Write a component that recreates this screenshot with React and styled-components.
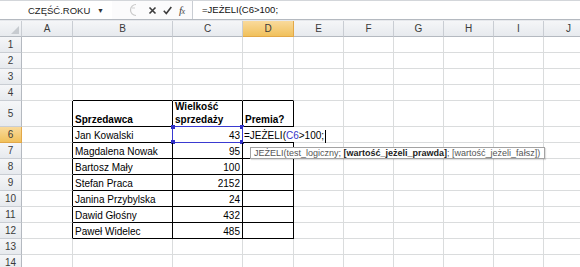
import React from 'react';
import styled, { createGlobalStyle } from 'styled-components';

const GlobalStyle = createGlobalStyle`
  html, body {
    margin: 0;
    padding: 0;
    background: #fff;
  }
  body {
    font-family: "Liberation Sans", Arial, sans-serif;
  }
`;

const COLS = [22, 51, 100, 70, 51, 50, 50, 50, 50, 50, 50];
const LETTERS = ['A', 'B', 'C', 'D', 'E', 'F', 'G', 'H', 'I', 'J'];
const ROWS = [1, 2, 3, 4, 5, 6, 7, 8, 9, 10, 11, 12, 13, 14];

// tabela B5:D12
const TABLE = [
  ['Sprzedawca', 'Wielkość sprzedaży', 'Premia?'],
  ['Jan Kowalski', 43],
  ['Magdalena Nowak', 95],
  ['Bartosz Mały', 100],
  ['Stefan Praca', 2152],
  ['Janina Przybylska', 24],
  ['Dawid Głośny', 432],
  ['Paweł Widelec', 485],
];

const inTable = (c, r) => c >= 1 && c <= 3 && r >= 5 && r <= 12;

const Window = styled.div`
  width: 580px;
  height: 267px;
  overflow: hidden;
  display: flex;
  flex-direction: column;
  background: #fff;
`;

const FormulaBar = styled.div`
  display: flex;
  height: 18px;
  flex-shrink: 0;
  border-top: 1px solid #d3d6da;
  border-bottom: 1px solid #b4b9c0;
  background: #fff;
`;

const BarGap = styled.div`
  height: 1px;
  flex-shrink: 0;
  background: #e6e8ec;
`;

const NameBox = styled.div`
  width: 112px;
  display: flex;
  align-items: center;
  font-size: 9.5px;
  color: #222;
`;

const NameText = styled.span`
  padding-left: 28px;
`;

const Arrow = styled.span`
  margin-left: auto;
  margin-right: 8px;
  font-size: 7px;
  color: #333;
`;

const Buttons = styled.div`
  width: 80px;
  display: flex;
  align-items: center;
  background: #fbfbfc;
`;

const Grip = styled.svg`
  margin-left: 15px;
  width: 12px;
  height: 14px;
`;

const Icon = styled.svg`
  margin-left: ${p => p.$gap}px;
  width: 9px;
  height: 9px;
`;

const Fx = styled.span`
  margin-left: 7px;
  font-family: "Liberation Serif", "Times New Roman", serif;
  font-style: italic;
  font-size: 11px;
  color: #444;
  letter-spacing: -0.5px;

  small {
    font-size: 8px;
  }
`;

const FormulaInput = styled.div`
  flex: 1;
  border-left: 1px solid #c9cdd3;
  padding-left: 9px;
  font-size: 9.5px;
  line-height: 18px;
  color: #111;
  white-space: nowrap;
`;

const Sheet = styled.div`
  display: grid;
  grid-template-columns: ${COLS.map(w => `${w}px`).join(' ')};
  grid-template-rows: 16px repeat(4, 16px) 26px repeat(9, 16px);
`;

const HeadCell = styled.div`
  box-sizing: border-box;
  display: flex;
  align-items: center;
  justify-content: center;
  font-size: 10px;
  color: #3a3a3a;
  position: relative;
  background: ${p => (p.$active
    ? 'linear-gradient(#f9da9c, #f1c15c)'
    : 'linear-gradient(#f5f6f8, #e7eaee)')};
  border-right: 1px solid ${p => (p.$active ? '#e2a848' : p.$row ? '#b4b9c0' : '#c9cdd3')};
  border-bottom: 1px solid ${p => (p.$active ? '#e2a848' : p.$row ? '#c9cdd3' : '#b4b9c0')};
`;

const Corner = styled(HeadCell)`
  &::after {
    content: '';
    position: absolute;
    right: 2px;
    bottom: 2px;
    border-style: solid;
    border-width: 0 0 8px 8px;
    border-color: transparent transparent #c7cbd0 transparent;
  }
`;

const Cell = styled.div`
  box-sizing: border-box;
  position: relative;
  display: flex;
  align-items: flex-end;
  justify-content: ${p => (p.$right ? 'flex-end' : 'flex-start')};
  padding: 0 2px;
  font-size: 10px;
  line-height: ${p => (p.$wrap ? '13px' : '12px')};
  font-weight: ${p => (p.$bold ? 700 : 400)};
  white-space: ${p => (p.$wrap ? 'normal' : 'nowrap')};
  color: #000;
  border-right: 1px solid ${p => (p.$rb ? '#000' : '#dadcdd')};
  border-bottom: 1px solid ${p => (p.$bb ? '#000' : '#dadcdd')};
`;

const RefBox = styled.div`
  position: absolute;
  inset: -1px;
  border: 1px solid #3a3ad0;
  pointer-events: none;
`;

const Handle = styled.span`
  position: absolute;
  width: 4px;
  height: 4px;
  background: #2f2fc8;
  ${p => (p.$top ? 'top: -2px;' : 'bottom: -2px;')}
  ${p => (p.$left ? 'left: -2px;' : 'right: -2px;')}
`;

const Editor = styled.div`
  position: absolute;
  left: 0;
  top: 0;
  bottom: 0;
  z-index: 2;
  display: flex;
  align-items: flex-end;
  padding-left: 1px;
  background: #fff;
  font-size: 10px;
  line-height: 12px;
  white-space: nowrap;
  color: #000;
`;

const RefText = styled.span`
  color: #3434c8;
`;

const Caret = styled.span`
  display: inline-block;
  width: 1px;
  height: 13px;
  margin-left: 1px;
  margin-bottom: -1px;
  background: #000;
`;

const Tooltip = styled.div`
  position: absolute;
  left: 7px;
  top: 20px;
  z-index: 5;
  padding: 0 4px 0 3px;
  border: 1px solid #a3a3a3;
  background: #fff;
  box-shadow: 1px 1px 1px rgba(0, 0, 0, 0.12);
  font-size: 9px;
  line-height: 10px;
  color: #555;
  white-space: nowrap;

  b {
    color: #222;
  }
`;

const renderCell = (c, r) => {
  const rb = inTable(c, r) || inTable(c + 1, r);
  const bb = inTable(c, r) || inTable(c, r + 1);
  const value = inTable(c, r) ? TABLE[r - 5][c - 1] : undefined;
  const key = `${c}-${r}`;

  if (c === 2 && r === 6) {
    return (
      <Cell key={key} $rb={rb} $bb={bb} $right>
        {value}
        <RefBox>
          <Handle $top $left />
          <Handle $top />
          <Handle $left />
          <Handle />
        </RefBox>
      </Cell>
    );
  }

  if (c === 3 && r === 6) {
    return (
      <Cell key={key} $rb={rb} $bb={bb}>
        <Editor>
          =JEŻELI(<RefText>C6</RefText>&gt;100;<Caret />
        </Editor>
        <Tooltip>
          JEŻELI(test_logiczny; <b>[wartość_jeżeli_prawda]</b>; [wartość_jeżeli_fałsz])
        </Tooltip>
      </Cell>
    );
  }

  return (
    <Cell
      key={key}
      $rb={rb}
      $bb={bb}
      $bold={r === 5 && inTable(c, r)}
      $wrap={r === 5 && c === 2}
      $right={typeof value === 'number'}
    >
      {value}
    </Cell>
  );
};

const App = () => (
  <Window>
    <GlobalStyle />
    <FormulaBar>
      <NameBox>
        <NameText>CZĘŚĆ.ROKU</NameText>
        <Arrow>▼</Arrow>
      </NameBox>
      <Buttons>
        <Grip viewBox="0 0 12 14">
          <path d="M9 1.5 A5.5 5.5 0 1 0 9 12.5" fill="none" stroke="#c9c9c9" strokeWidth="1.2" />
          <path d="M5 5 L8 5" stroke="#cfcfcf" strokeWidth="1" />
        </Grip>
        <Icon $gap={9} viewBox="0 0 9 9">
          <path d="M1.5 1.5 L7.5 7.5 M7.5 1.5 L1.5 7.5" stroke="#3c3c3c" strokeWidth="1.6" />
        </Icon>
        <Icon $gap={6} viewBox="0 0 9 9">
          <path d="M0.8 4.8 L3.3 7.5 L8.3 1" fill="none" stroke="#3c3c3c" strokeWidth="1.6" />
        </Icon>
        <Fx>f<small>x</small></Fx>
      </Buttons>
      <FormulaInput>=JEŻELI(C6&gt;100;</FormulaInput>
    </FormulaBar>
    <BarGap />
    <Sheet>
      <Corner />
      {LETTERS.map((l, i) => (
        <HeadCell key={l} $active={i === 3}>{l}</HeadCell>
      ))}
      {ROWS.map(r => (
        <React.Fragment key={r}>
          <HeadCell $row $active={r === 6}>{r}</HeadCell>
          {LETTERS.map((_, c) => renderCell(c, r))}
        </React.Fragment>
      ))}
    </Sheet>
  </Window>
);

export default App;
